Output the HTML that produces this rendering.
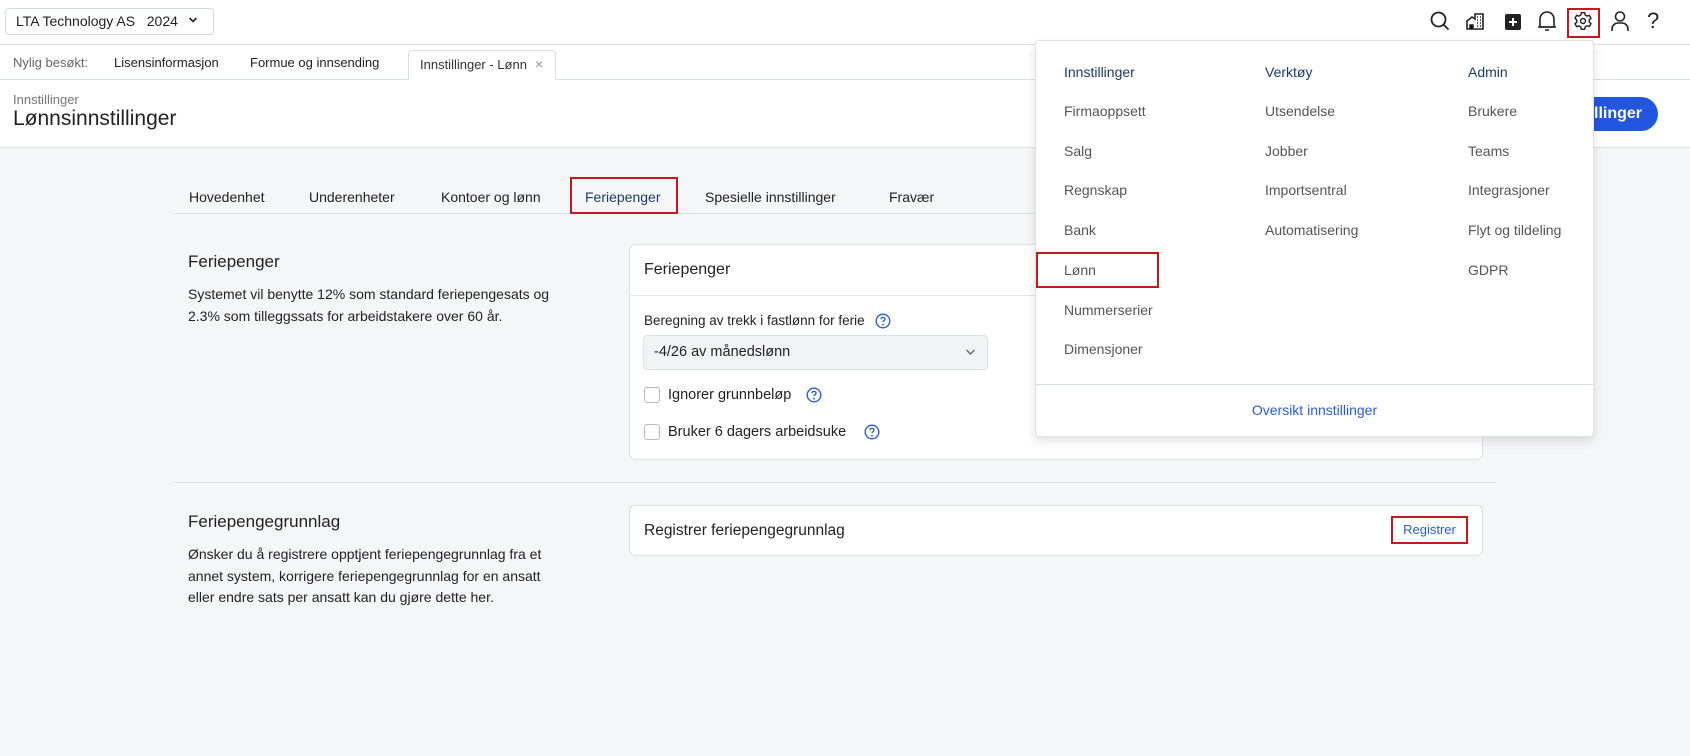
<!DOCTYPE html>
<html><head><meta charset="utf-8"><style>
*{margin:0;padding:0;box-sizing:border-box}
body{width:1690px;height:756px;overflow:hidden;background:#f5f6f7;font-family:"Liberation Sans",sans-serif;color:#222;position:relative;font-size:14px}
.a{position:absolute;white-space:nowrap}
.t{line-height:16px}
svg{position:absolute}
</style></head><body>
<div class="a" style="left:0;top:0;width:1690px;height:148px;background:#fff;border-bottom:1px solid #dcdfe3"></div>
<div class="a" style="left:0;top:44px;width:1690px;height:1px;background:#dcdfe3"></div>
<div class="a" style="left:0;top:79px;width:1690px;height:1px;background:#dcdfe3"></div>
<div class="a" style="left:5px;top:8px;width:209px;height:27px;border:1px solid #d6d9dd;border-radius:4px"></div>
<div class="a t" style="left:16px;top:13px;font-size:14px">LTA Technology AS&nbsp;&nbsp;&nbsp;2024</div>
<svg style="left:188px;top:16px" width="10" height="8" viewBox="0 0 10 8"><path d="M1.5 2l3.5 3.5L8.5 2" fill="none" stroke="#222" stroke-width="1.6"/></svg>
<div class="a t" style="left:13px;top:55px;font-size:13px;color:#666">Nylig besøkt:</div>
<div class="a t" style="left:114px;top:55px;font-size:13px">Lisensinformasjon</div>
<div class="a t" style="left:250px;top:55px;font-size:13px">Formue og innsending</div>
<div class="a" style="left:408px;top:50px;width:148px;height:30px;border:1px solid #dcdfe3;border-bottom:none;border-radius:4px 4px 0 0;background:#fff"></div>
<div class="a t" style="left:420px;top:57px;font-size:13px;color:#333">Innstillinger - Lønn</div>
<div class="a t" style="left:535px;top:56px;font-size:14px;color:#999">×</div>
<div class="a t" style="left:13px;top:92px;font-size:13px;color:#777">Innstillinger</div>
<div class="a" style="left:13px;top:106px;font-size:21px;line-height:26px;color:#222">Lønnsinnstillinger</div>
<div class="a" style="left:1530px;top:97px;width:128px;height:34px;background:#2356e0;border-radius:17px;color:#fff;font-weight:bold;font-size:16px;line-height:34px;text-align:right;padding-right:16px">nstillinger</div>
<svg style="left:1429px;top:10px" width="22" height="22" viewBox="0 0 22 22"><circle cx="9.5" cy="9.5" r="7" fill="none" stroke="#222" stroke-width="1.8"/><path d="M14.5 14.5l5 5" stroke="#222" stroke-width="1.8"/></svg>
<svg style="left:1465px;top:11px" width="20" height="20" viewBox="0 0 20 20"><path d="M2 18V10l5-4 3 2V3h8v15z" fill="none" stroke="#222" stroke-width="1.6"/><path d="M5 18v-4h3v4M12 6h1M15 6h1M12 9h1M15 9h1M12 12h1M15 12h1M12 15h1M15 15h1" stroke="#222" stroke-width="1.5"/></svg>
<div class="a" style="left:1505px;top:14px;width:16px;height:16px;background:#222;border-radius:2px"></div>
<svg style="left:1505px;top:14px" width="16" height="16" viewBox="0 0 16 16"><path d="M8 4v8M4 8h8" stroke="#fff" stroke-width="2"/></svg>
<svg style="left:1537px;top:9px" width="20" height="24" viewBox="0 0 20 24"><path d="M3 18V10a7 7 0 0114 0v8z" fill="none" stroke="#222" stroke-width="1.6" stroke-linejoin="round"/><path d="M1 18h18M8 21h4" stroke="#222" stroke-width="1.6"/></svg>
<div class="a" style="left:1567px;top:8px;width:33px;height:30px;border:2px solid #c8161d"></div>
<svg style="left:1573px;top:11px" width="20" height="20" viewBox="0 0 24 24"><path d="M10 2h4l.6 2.8 2.3 1.3 2.7-.9 2 3.5-2.1 1.9v2.6l2.1 1.9-2 3.5-2.7-.9-2.3 1.3L14 22h-4l-.6-2.8-2.3-1.3-2.7.9-2-3.5 2.1-1.9v-2.6L2.4 8.7l2-3.5 2.7.9 2.3-1.3z" fill="none" stroke="#222" stroke-width="1.7" stroke-linejoin="round"/><circle cx="12" cy="12" r="3" fill="none" stroke="#222" stroke-width="1.7"/></svg>
<svg style="left:1610px;top:10px" width="20" height="22" viewBox="0 0 20 22"><circle cx="10" cy="6.5" r="4.5" fill="none" stroke="#222" stroke-width="1.6"/><path d="M2 21v-2a6 6 0 016-6h4a6 6 0 016 6v2" fill="none" stroke="#222" stroke-width="1.6"/></svg>
<div class="a" style="left:1647px;top:8px;font-size:22px;line-height:26px;color:#222">?</div>
<div class="a" style="left:175px;top:213px;width:1321px;height:1px;background:#dcdfe3"></div>
<div class="a t" style="left:189px;top:189px">Hovedenhet</div>
<div class="a t" style="left:309px;top:189px">Underenheter</div>
<div class="a t" style="left:441px;top:189px">Kontoer og lønn</div>
<div class="a t" style="left:585px;top:189px;color:#1b3a6b">Feriepenger</div>
<div class="a t" style="left:705px;top:189px">Spesielle innstillinger</div>
<div class="a t" style="left:889px;top:189px">Fravær</div>
<div class="a" style="left:570px;top:177px;width:108px;height:37px;border:2px solid #c8161d"></div>
<div class="a" style="left:188px;top:252px;font-size:17px;line-height:20px">Feriepenger</div>
<div class="a" style="left:188px;top:283px;font-size:14px;line-height:22px">Systemet vil benytte 12% som standard feriepengesats og<br>2.3% som tilleggssats for arbeidstakere over 60 år.</div>
<div class="a" style="left:629px;top:244px;width:854px;height:216px;background:#fff;border:1px solid #dcdfe3;border-radius:6px"></div>
<div class="a" style="left:630px;top:295px;width:852px;height:1px;background:#e3e5e8"></div>
<div class="a" style="left:644px;top:260px;font-size:16px;line-height:19px">Feriepenger</div>
<div class="a t" style="left:644px;top:313px;font-size:13.5px">Beregning av trekk i fastlønn for ferie</div>
<div class="a" style="left:643px;top:335px;width:345px;height:35px;background:#f2f3f5;border:1px solid #dcdfe3;border-radius:4px"></div>
<div class="a t" style="left:654px;top:344px;font-size:14.5px">-4/26 av månedslønn</div>
<svg style="left:965px;top:348px" width="11" height="8" viewBox="0 0 11 8"><path d="M1.5 2l4 4 4-4" fill="none" stroke="#666" stroke-width="1.3"/></svg>
<div class="a" style="left:644px;top:387px;width:16px;height:16px;border:1px solid #bbb;border-radius:3px;background:#fff"></div>
<div class="a t" style="left:668px;top:387px;font-size:14.5px">Ignorer grunnbeløp</div>
<div class="a" style="left:644px;top:424px;width:16px;height:16px;border:1px solid #bbb;border-radius:3px;background:#fff"></div>
<div class="a t" style="left:668px;top:424px;font-size:14.5px">Bruker 6 dagers arbeidsuke</div>
<svg style="left:875px;top:313px" width="16" height="16" viewBox="0 0 16 16"><circle cx="8" cy="8" r="6.8" fill="none" stroke="#2b5bd7" stroke-width="1.4"/><path d="M6 6.3a2 2 0 114 0c0 1.3-2 1.4-2 2.8" fill="none" stroke="#2b5bd7" stroke-width="1.4"/><circle cx="8" cy="11.6" r=".9" fill="#2b5bd7"/></svg>
<svg style="left:806px;top:387px" width="16" height="16" viewBox="0 0 16 16"><circle cx="8" cy="8" r="6.8" fill="none" stroke="#2b5bd7" stroke-width="1.4"/><path d="M6 6.3a2 2 0 114 0c0 1.3-2 1.4-2 2.8" fill="none" stroke="#2b5bd7" stroke-width="1.4"/><circle cx="8" cy="11.6" r=".9" fill="#2b5bd7"/></svg>
<svg style="left:864px;top:424px" width="16" height="16" viewBox="0 0 16 16"><circle cx="8" cy="8" r="6.8" fill="none" stroke="#2b5bd7" stroke-width="1.4"/><path d="M6 6.3a2 2 0 114 0c0 1.3-2 1.4-2 2.8" fill="none" stroke="#2b5bd7" stroke-width="1.4"/><circle cx="8" cy="11.6" r=".9" fill="#2b5bd7"/></svg>
<div class="a" style="left:175px;top:482px;width:1321px;height:1px;background:#dcdfe3"></div>
<div class="a" style="left:188px;top:512px;font-size:17px;line-height:20px">Feriepengegrunnlag</div>
<div class="a" style="left:188px;top:544px;font-size:14px;line-height:21.5px">Ønsker du å registrere opptjent feriepengegrunnlag fra et<br>annet system, korrigere feriepengegrunnlag for en ansatt<br>eller endre sats per ansatt kan du gjøre dette her.</div>
<div class="a" style="left:629px;top:505px;width:854px;height:51px;background:#fff;border:1px solid #dcdfe3;border-radius:6px"></div>
<div class="a" style="left:644px;top:521px;font-size:15.5px;line-height:19px">Registrer feriepengegrunnlag</div>
<div class="a" style="left:1391px;top:516px;width:77px;height:28px;border:2px solid #c8161d;color:#2b5bd7;font-size:13px;line-height:24px;text-align:center">Registrer</div>
<div class="a" style="left:1035px;top:40px;width:559px;height:397px;background:#fff;border:1px solid #e0e2e5;border-radius:4px;box-shadow:0 4px 10px rgba(0,0,0,.12)"></div>
<div class="a t" style="left:1064px;top:64px;color:#1b3a6b;font-size:14px">Innstillinger</div>
<div class="a t" style="left:1265px;top:64px;color:#1b3a6b;font-size:14px">Verktøy</div>
<div class="a t" style="left:1468px;top:64px;color:#1b3a6b;font-size:14px">Admin</div>
<div class="a" style="left:1064px;top:92px;line-height:39.7px;color:#555;font-size:14px">Firmaoppsett<br>Salg<br>Regnskap<br>Bank<br>Lønn<br>Nummerserier<br>Dimensjoner</div>
<div class="a" style="left:1265px;top:92px;line-height:39.7px;color:#555;font-size:14px">Utsendelse<br>Jobber<br>Importsentral<br>Automatisering</div>
<div class="a" style="left:1468px;top:92px;line-height:39.7px;color:#555;font-size:14px">Brukere<br>Teams<br>Integrasjoner<br>Flyt og tildeling<br>GDPR</div>
<div class="a" style="left:1036px;top:252px;width:123px;height:36px;border:2px solid #c8161d"></div>
<div class="a" style="left:1036px;top:384px;width:557px;height:1px;background:#d8dbdf"></div>
<div class="a t" style="left:1035px;top:402px;width:559px;text-align:center;color:#2b5bd7;font-size:14px">Oversikt innstillinger</div>
</body></html>
